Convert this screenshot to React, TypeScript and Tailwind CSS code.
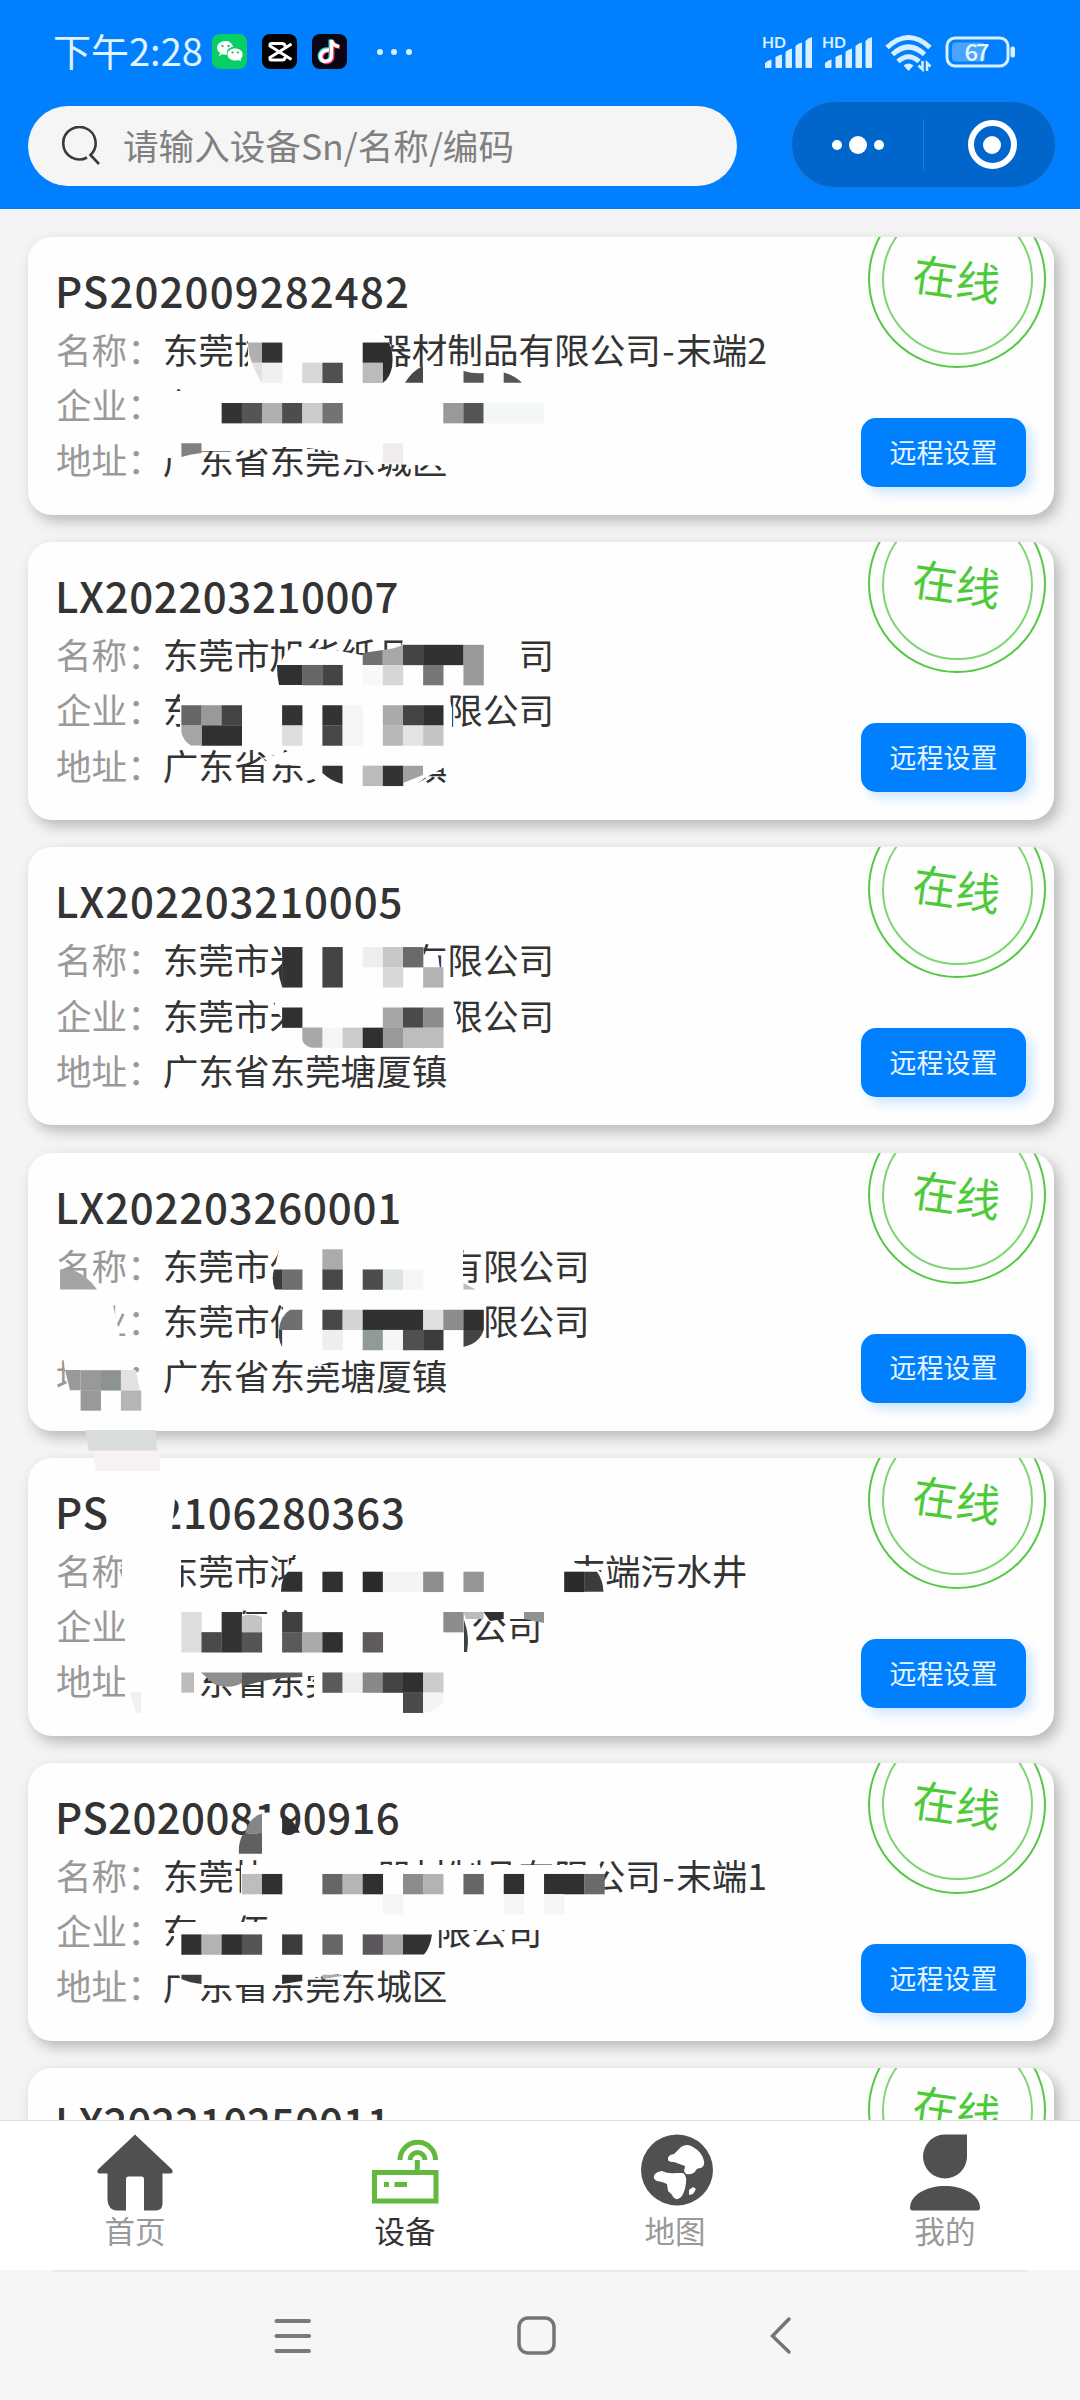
import type { ReactNode } from 'react'

type Device = {
  sn: string
  snClass: string
  name?: string
  company?: string
  address?: string
}

// \u3000 keeps the width of a hidden character
const DEVICES: Device[] = [
  {
    sn: 'PS202009282482',
    snClass: 'tracking-[1.1px]',
    name: '东莞协\u3000\u3000\u3000器材制品有限公司-末端2',
    company: '东',
    address: '广东省东莞东城区',
  },
  {
    sn: 'LX202203210007',
    snClass: 'tracking-[0.6px]',
    name: '东莞市旭华纸品\u3000\u3000\u3000司',
    company: '东\u3000\u3000\u3000\u3000\u3000\u3000\u3000限公司',
    address: '广东省东莞\u3000\u3000镇',
  },
  {
    sn: 'LX202203210005',
    snClass: 'tracking-[0.9px]',
    name: '东莞市米\u3000\u3000\u3000有限公司',
    company: '东莞市米\u3000\u3000\u3000\u3000限公司',
    address: '广东省东莞塘厦镇',
  },
  {
    sn: 'LX202203260001',
    snClass: 'tracking-[0.8px]',
    name: '东莞市伟\u3000\u3000\u3000\u3000有限公司',
    company: '东莞市佰\u3000\u3000\u3000\u3000\u3000限公司',
    address: '广东省东莞塘厦镇',
  },
  {
    sn: 'PS202106280363',
    snClass: 'tracking-[0.8px]',
    name: '东莞市鸿\u3000\u3000\u3000\u3000\u3000\u3000司-末端污水井',
    company: '\u3000\u3000佰东\u3000\u3000\u3000\u3000\u00a0\u00a0\u00a0公司',
    address: '\u3000东省东莞',
  },
  {
    sn: 'PS202008190916',
    snClass: 'tracking-[0.4px]',
    name: '东莞协\u3000\u3000\u3000器材制品有限公司-末端1',
    company: '东\u3000佰\u3000\u3000\u3000\u3000\u00a0\u00a0\u00a0限公司',
    address: '广东省东莞东城区',
  },
  {
    sn: 'LX202210250011',
    snClass: 'tracking-[0px]',
  },
]

// size of one mosaic cell
const CELL = 20.15

// areas that are wiped out before the cells are drawn
const WIPES = [
  // card 1
  '248,325 383,325 383,335 391,345 393,386 248,386',
  '405,383 412,372 423,366 528,366 528,386 405,386',
  '150,393 190,390 560,390 560,430 150,430',
  '160,438 160,458 200,458 201,451 240,451 275,447 300,447 330,451 345,459 370,462 383,464 448,466 448,438',
  // card 2
  '281,690 281,662 284,656 292,646 310,648 335,650 362,655 385,653 402,645 404,630 516,630 516,690',
  '180,688 446,688 452,708 452,748 180,748',
  '262,758 275,764 300,766 308,775 322,785 322,792 405,792 425,778 443,768 450,765 450,748 300,748 275,755',
  // card 3
  '282,936 422,936 424,955 438,955 443,990 282,990',
  '275,996 452,996 458,1018 452,1050 284,1050 284,1020 275,1010',
  // card 4
  '282,1238 463,1238 463,1292 276,1292 274,1270',
  '283,1300 484,1300 484,1352 283,1352',
  '34,1275 60,1269 97,1289 112,1300 119,1332 121,1345 140,1358 130,1362 132,1369 142,1410 70,1410 63,1355 40,1350 34,1330',
  '300,1362 310,1368 338,1360 338,1355 300,1355',
  // card 5
  '107,1480 168,1480 175,1500 171,1540 107,1540',
  '122,1545 181,1545 181,1600 122,1600',
  '125,1600 181,1600 181,1715 125,1715',
  '285,1595 285,1570 297,1557 572,1557 575,1563 596,1568 604,1575 606,1595',
  '181,1614 466,1614 466,1600 548,1600 548,1619 466,1619 470,1655 181,1655',
  '181,1660 445,1660 445,1715 314,1715 314,1676 195,1676 195,1712 181,1712',
  // card 6
  '262,1813 274,1812 282,1819 282,1840 262,1840',
  '241,1865 600,1865 606,1897 241,1897',
  '174,1930 178,1922 270,1922 270,1905 548,1905 548,1930 430,1930 430,1957 174,1957',
  '177,1966 180,1978 201,1985 290,1985 310,1978 340,1974 345,1966',
]

// [column, row, columns, rows, colour]
const CELLS: [number, number, number, number, string][] = [
  [13, 17, 1, 1, '#333333'], [13, 18, 1, 1, '#f0f0f0'], [15, 18, 1, 1, '#d8d8d8'], [16, 18, 1, 1, '#505050'],
  [18, 17, 1, 1, '#2e2e2e'], [18, 18, 1, 1, '#bbbbbb'], [11, 20, 1, 1, '#333333'], [12, 20, 1, 1, '#555555'],
  [13, 20, 1, 1, '#b0b0b0'], [14, 20, 1, 1, '#4d4d4d'], [15, 20, 1, 1, '#cccccc'], [16, 20, 1, 1, '#737373'],
  [22, 20, 1, 1, '#999999'], [23, 20, 1, 1, '#555555'], [24, 20, 3, 1, '#f3f8f7'], [19, 22, 1, 1, '#f0ecee'],

  [15, 33, 1, 1, '#666666'], [16, 33, 1, 1, '#444444'], [20, 32, 1, 1, '#444444'], [21, 32, 2, 1, '#303030'],
  [23, 32, 1, 2, '#999999'], [18, 33, 1, 1, '#f8f8f8'], [19, 33, 1, 1, '#d6d6d6'], [21, 33, 1, 1, '#777777'],
  [9, 35, 1, 1, '#666666'], [10, 35, 1, 1, '#999999'], [11, 35, 1, 1, '#444444'], [10, 36, 2, 1, '#303030'],
  [14, 35, 1, 1, '#333333'], [14, 36, 1, 1, '#dddddd'], [16, 35, 1, 1, '#333333'], [16, 36, 1, 1, '#484848'],
  [17, 35, 1, 2, '#f5f5f5'], [19, 35, 1, 1, '#aaaaaa'], [20, 35, 1, 1, '#444444'], [21, 35, 1, 1, '#303030'],
  [19, 36, 1, 1, '#b8b8b8'], [20, 36, 1, 1, '#e4e4e4'], [21, 36, 1, 1, '#c4c4c4'], [18, 38, 1, 1, '#bbbbbb'],
  [19, 38, 1, 1, '#333333'],

  [14, 47, 1, 2, '#333333'], [16, 47, 1, 2, '#444444'], [18, 47, 1, 1, '#eeeeee'], [19, 47, 1, 1, '#c8c8c8'],
  [19, 48, 1, 1, '#d8d8d8'], [20, 47, 1, 1, '#6a6a6a'], [21, 48, 1, 1, '#b3b3b3'], [14, 50, 1, 1, '#303030'],
  [19, 50, 1, 1, '#a5a5a5'], [20, 50, 1, 1, '#4a4a4a'], [21, 50, 1, 1, '#8c8c8c'], [16, 51, 1, 1, '#f6f6f6'],
  [17, 51, 1, 1, '#cccccc'], [18, 51, 1, 1, '#303030'], [19, 51, 1, 1, '#999999'], [20, 51, 2, 1, '#bdbdbd'],

  [14, 63, 1, 1, '#6f6f6f'], [16, 62, 1, 1, '#ababab'], [16, 63, 1, 1, '#484848'], [18, 63, 1, 1, '#4d4d4d'],
  [19, 63, 1, 1, '#dfe4e0'], [20, 63, 1, 1, '#f6f6f6'], [16, 65, 1, 1, '#484848'], [17, 65, 1, 1, '#d4d4d4'],
  [18, 65, 3, 1, '#303030'], [21, 65, 1, 1, '#e0e0e0'], [22, 65, 1, 1, '#8c8c8c'], [23, 65, 1, 1, '#303030'],
  [16, 66, 1, 1, '#eeeeee'], [18, 66, 1, 1, '#929a98'], [19, 66, 1, 1, '#f5f7f7'], [20, 66, 1, 1, '#505050'],
  [21, 66, 1, 1, '#3c3c3c'], [4, 68, 1, 1, '#999999'], [5, 68, 1, 1, '#8d9391'], [4, 69, 1, 1, '#999999'],
  [6, 69, 1, 1, '#b5b5b5'],

  [16, 78, 1, 1, '#303030'], [18, 78, 1, 1, '#2b2b2b'], [19, 78, 2, 1, '#f5f4f5'], [21, 78, 1, 1, '#8a8e8c'],
  [23, 78, 1, 1, '#959595'], [28, 78, 1, 1, '#2b2b2b'], [9, 80, 1, 2, '#dddddd'], [11, 80, 1, 2, '#333333'],
  [14, 80, 1, 1, '#404040'], [22, 80, 1, 1, '#8c8c8c'], [10, 81, 1, 1, '#4a4a4a'],
  [12, 81, 1, 1, '#555555'], [14, 81, 1, 1, '#5a5a5a'], [15, 81, 1, 1, '#aaaaaa'], [16, 81, 1, 1, '#303030'],
  [18, 81, 1, 1, '#5f5a5c'], [16, 83, 1, 1, '#5a5a5a'], [17, 83, 1, 1, '#eeeeee'], [18, 83, 1, 1, '#888888'],
  [19, 83, 1, 1, '#444444'], [20, 83, 1, 1, '#303030'], [21, 83, 1, 1, '#cccccc'], [20, 84, 1, 1, '#4a4a4a'],

  [12, 93, 1, 1, '#bdbdbd'], [13, 93, 1, 1, '#303030'], [16, 93, 1, 1, '#666666'], [17, 93, 1, 1, '#b5b5b5'],
  [18, 93, 1, 1, '#303030'], [20, 93, 1, 1, '#8c8c8c'], [21, 93, 1, 1, '#b3b3b3'], [23, 93, 1, 1, '#666666'],
  [25, 93, 1, 1, '#303030'], [27, 93, 2, 1, '#303030'], [29, 93, 1, 1, '#6a6a6a'], [19, 94, 1, 1, '#f5f5f5'],
  [25, 94, 1, 1, '#f5f5f5'], [27, 94, 1, 1, '#f5f5f5'], [9, 96, 1, 1, '#303030'], [10, 96, 1, 1, '#b3b3b3'],
  [11, 96, 1, 1, '#303030'], [12, 96, 1, 1, '#555555'], [14, 96, 1, 1, '#3c3c3c'], [16, 96, 1, 1, '#666666'],
  [18, 96, 1, 1, '#5c575c'], [19, 96, 1, 1, '#aaa7ab'],
]

// cells cut by the round brush
const SHARDS: [string, string][] = [
  ['M248 342.5H262V362.7H252Q248 353 248 342.5Z', '#b0b0b0'],
  ['M252 362.7H262V383Q256 374 252 362.7Z', '#e2e2e2'],
  ['M382.8 342.5H389Q394 353 392 367Q390 378 383 382.8Z', '#2e2e2e'],
  ['M405 382.8Q412 371 423 366V382.8Z', '#484848'],
  ['M463.5 371Q474 374 483.6 373V382.8H463.5Z', '#555555'],
  ['M503.7 372.5Q514 375 522 382.8H503.7Z', '#555555'],
  ['M181.4 443.3H201.5V453Q191 454 181.4 457Z', '#808080'],
  ['M277 665H302.3V685H279Q277 676 277 665Z', '#303030'],
  ['M362.7 653L382.8 650V665H362.7Z', '#707070'],
  ['M382.8 650Q394 649 403 644.8V665H382.8Z', '#a8a8a8'],
  ['M181.4 725.4H201.5V745.5H191Q183 741 181.4 732Z', '#a5a5a5'],
  ['M322.4 765.7H342.6V784Q331 781 322.4 773Z', '#333333'],
  ['M403 765.7H423V775L403 783Z', '#a0a0a0'],
  ['M278 967H282.1V987Q279 978 278 967Z', '#333333'],
  ['M302.3 1027.6H322.4V1047.8H312Q304 1046 302.3 1040Z', '#a8a8a8'],
  ['M282.1 1269.4H274Q271 1280 275 1289.6H282.1Z', '#3a3a3a'],
  ['M463.5 1283Q470 1287 476 1289.6H463.5Z', '#bbbbbb'],
  ['M60 1269.4H72Q88 1276 97 1289.6H60Z', '#a4a4a4'],
  ['M302.3 1309.7H290Q280 1316 279 1330H302.3Z', '#6f6f6f'],
  ['M279 1330H282.1V1347Q278 1340 279 1330Z', '#404040'],
  ['M463.5 1330H483.6Q480 1343 463.5 1347Z', '#444444'],
  ['M65 1370H80.6V1390.3H70Z', '#999999'],
  ['M120.9 1370H136L139.5 1390.3H120.9Z', '#e2e2e2'],
  ['M85 1430H156L157 1450.8H89Z', '#d9ddd9'],
  ['M93 1450.8H160V1471H96Z', '#f5f1f4'],
  ['M281 1591.8Q281 1578 288 1571.7H302.3V1591.8Z', '#303030'],
  ['M584.3 1571.7H597Q603 1580 603.5 1591.8H584.3Z', '#3c3c3c'],
  ['M241.8 1616Q252 1613 262 1617V1632.2H241.8Z', '#c4c4c4'],
  ['M463.5 1612H483.6V1619H466Z', '#bbbbbb'],
  ['M483.6 1612H503.7V1619L490 1621Z', '#303030'],
  ['M524 1612H544V1623L524 1619Z', '#919191'],
  ['M464 1620Q470 1636 467 1652H464Z', '#404040'],
  ['M181.4 1672.5H194V1692.6H181.4Z', '#bbbbbb'],
  ['M201 1672.5H241.8V1683Q230 1690 214 1684Z', '#8e8e8e'],
  ['M241.8 1672.5H302.3V1677Q270 1677 241.8 1687Z', '#5a5a5a'],
  ['M423 1692.6H443V1702Q436 1712 423 1712.7Z', '#f4f4f4'],
  ['M130 1692.6H141V1712.7H136Z', '#edf1ef'],
  ['M245 1833.7Q248 1818 262 1813.5V1833.7Z', '#858585'],
  ['M262 1833.7V1853.8H239Q238 1843 243 1833.7Z', '#606060'],
  ['M282.1 1813.5Q294 1820 300 1832.7H282.1Z', '#303030'],
  ['M403 1934.4H432Q430 1948 424 1954.5H403Z', '#333333'],
  ['M181.4 1974.7H201.5V1984Q190 1983 181.4 1979Z', '#3c3c3c'],
  ['M282.1 1974.7H302.3V1981L282.1 1984Z', '#303030'],
  ['M322.4 1974.7H342V1976L322.4 1979Z', '#aaaaaa'],
]

function Mosaic() {
  return (
    <svg className="pointer-events-none absolute inset-0" width="1080" height="1911" viewBox="0 209 1080 1911">
      {WIPES.map(points => (
        <polygon key={points} points={points} fill="#fefefe" />
      ))}
      {CELLS.map(([col, row, w, h, fill]) => (
        <rect key={`${col}-${row}`} x={col * CELL} y={row * CELL} width={w * CELL + 0.2} height={h * CELL + 0.2} fill={fill} />
      ))}
      {SHARDS.map(([d, fill]) => (
        <path key={d} d={d} fill={fill} />
      ))}
    </svg>
  )
}

function Signal() {
  return (
    <svg width="52" height="36" viewBox="0 0 52 36" fill="#d8efff">
      <text x="0" y="13.5" fontSize="15" fontWeight="700" fontFamily="Lato, sans-serif" textLength="24" lengthAdjust="spacingAndGlyphs">HD</text>
      <path d="M3 33V29Q6 26 9.500 25.500V33Q9.500 34 8.500 34H4Q3 34 3 33Z" />
      <path d="M13.500 33V23Q16 21 20 20.500V33Q20 34 19 34H14.500Q13.500 34 13.500 33Z" />
      <path d="M23.500 33V18Q26 15 30 14.500V33Q30 34 29 34H24.500Q23.500 34 23.500 33Z" />
      <path d="M33.500 33V12Q36 9 40 8.500V33Q40 34 39 34H34.500Q33.500 34 33.500 33Z" />
      <path d="M43.500 33V7Q46 4 50 3V33Q50 34 49 34H44.500Q43.500 34 43.500 33Z" />
    </svg>
  )
}

function StatusBar() {
  return (
    <div className="flex h-[104px] items-start pl-[53px] pr-[64px] pt-[34px]">
      <span className="mt-[-2px] w-[159px] whitespace-nowrap text-[38px] leading-[36px] text-[#e0f3ff]">下午2:28</span>
      <div className="flex gap-[15px]">
        <svg width="35" height="35" viewBox="0 0 35 35">
          <rect width="35" height="35" rx="8" fill="#07cf63" />
          <path d="M13.500 7C8.500 7 5 10 5 14Q5 17 8 19L7 22L10.500 20.200Q13 21 15 20.500Q14 14 21 12.800Q19.500 7 13.500 7Z" fill="#fff" />
          <path d="M23 14.500C18.500 14.500 15.500 17 15.500 20.500C15.500 24 19 26.500 23 26.500Q25 26.500 26.500 26L29 27.300L28.600 25Q30.700 23.200 30.700 20.500C30.700 17 27.500 14.500 23 14.500Z" fill="#fff" />
          <g fill="#07a551">
            <circle cx="10.500" cy="12" r="1.100" />
            <circle cx="16.500" cy="12" r="1.100" />
            <circle cx="20.500" cy="18.500" r="1" />
            <circle cx="25.800" cy="18.500" r="1" />
          </g>
        </svg>
        <svg width="35" height="35" viewBox="0 0 35 35">
          <rect width="35" height="35" rx="8" fill="#000" />
          <path d="M29.500 10L8 23.500V25Q8 26 9.500 26H20Q23 26 23 23M29.500 25.500L8 12V10.500Q8 9.500 9.500 9.500H20Q23 9.500 23 12.500" fill="none" stroke="#fff" strokeWidth="3" />
        </svg>
        <svg width="35" height="35" viewBox="0 0 35 35">
          <rect width="35" height="35" rx="8" fill="#0b0613" />
          <g fill="none" strokeWidth="4">
            <path d="M16.500 15.500C10 14.500 6.500 20 8 24C10.500 29 18.500 28 18.500 22V5.500Q19.500 11 26 12" stroke="#35dfd8" />
            <path d="M18 17C12 16 8.500 21 10 25C12.500 30.500 20.500 28.500 20.500 22.500V7Q21.500 12 28 13" stroke="#f2315e" />
            <path d="M17 16.200C11 15.500 7.500 20.500 9 24.500C11.500 29.500 19.500 27.500 19.500 22V6Q20.500 11.500 27 12.500" stroke="#fff" strokeWidth="3.400" />
          </g>
        </svg>
      </div>
      <div className="flex h-[36px] flex-1 items-center gap-[8.500px] pl-[29.500px]">
        <span className="size-[6px] rounded-full bg-[#d8efff]" />
        <span className="size-[6px] rounded-full bg-[#d8efff]" />
        <span className="size-[6px] rounded-full bg-[#d8efff]" />
      </div>
      <div className="flex">
        <Signal />
        <div className="ml-[8px]"><Signal /></div>
        <svg className="ml-[11px]" width="48" height="38" viewBox="0 0 48 38">
          <g fill="none" stroke="#d8efff" strokeWidth="5">
            <path d="M2 13.500Q23.500 -6.500 45 13.500" />
            <path d="M7.500 20.500Q23.500 5.500 39.500 20.500" />
            <path d="M13 27.500Q23.500 18 34 27.500" />
          </g>
          <path d="M18.500 31.500Q23.500 27.500 28.500 31.500L23.500 37Z" fill="#d8efff" />
          <path d="M38 27V35.500L33.500 31M42 37V29L45.500 32.500" fill="none" stroke="#0080ff" strokeWidth="5" />
          <path d="M37.500 27V35.500L33.500 31.500M42 37V29L45.500 32.500" fill="none" stroke="#d8efff" strokeWidth="2.500" />
        </svg>
        <svg className="ml-[12px]" width="71" height="36" viewBox="0 0 71 36">
          <rect x="2" y="4" width="61" height="28" rx="8" fill="none" stroke="#d8efff" strokeWidth="3" />
          <rect x="7" y="8.500" width="33" height="19" rx="4" fill="#4aa4ff" />
          <rect x="65.500" y="12.500" width="4.500" height="11" rx="2" fill="#d8efff" />
          <text x="32" y="26.500" textAnchor="middle" fontSize="24" fontWeight="500" fontFamily="'Noto Sans CJK SC', sans-serif" fill="#e8f6ff" textLength="25">67</text>
        </svg>
      </div>
    </div>
  )
}

function Header() {
  return (
    <header className="h-[209px] bg-[#0080ff]">
      <StatusBar />
      <div className="flex pl-[28px]">
        <div className="mt-[2px] flex h-[80px] w-[709px] items-center rounded-full bg-[#f5f5f5] pl-[34px]">
          <svg width="40" height="40" viewBox="0 0 40 40" fill="none" stroke="#3a3a3a" strokeWidth="2.600">
            <path d="M25 31.500A16.200 16.200 0 1 1 28.500 29L37 38" />
          </svg>
          <span className="ml-[21px] mt-[-3px] text-[35.600px] leading-[52px] text-[#808080]">请输入设备Sn/名称/编码</span>
        </div>
        <div className="ml-[54px] mt-[-3px] flex h-[87px] w-[265px] items-center rounded-full border border-[#1a7cdd] bg-[#0066cc]">
          <div className="flex w-[131px] items-center justify-center gap-[7px]">
            <span className="size-[10px] rounded-full bg-white" />
            <span className="size-[18px] rounded-full bg-white" />
            <span className="size-[10px] rounded-full bg-white" />
          </div>
          <div className="h-[52px] w-px bg-[#1a7cdd]" />
          <div className="flex flex-1 justify-center pl-[5px]">
            <div className="flex size-[49px] items-center justify-center rounded-full border-[6px] border-white">
              <div className="size-[18px] rounded-full bg-white" />
            </div>
          </div>
        </div>
      </div>
    </header>
  )
}

function Row({ label, value }: { label: string; value: string }) {
  const [company, site] = value.split('-')
  return (
    <div className="flex h-[55.200px] whitespace-pre text-[35.600px] leading-[55px]">
      <span className="text-[#999999]">{label}：</span>
      <span className="text-[#333333]">
        {company}
        {site && <span className="px-[1.500px]">-</span>}
        {site}
      </span>
    </div>
  )
}

function DeviceCard({ device }: { device: Device }) {
  return (
    <div className="relative h-[278px] shrink-0 rounded-[24px] bg-[#fefefe] shadow-[5px_6px_14px_rgba(0,0,0,0.25)]">
      <div className="pl-[28px] pt-[25px]">
        <div className={`ml-[-1px] mb-[3px] text-[42px] font-medium leading-[56px] text-[#333333] ${device.snClass}`}>{device.sn}</div>
        {device.name && <Row label="名称" value={device.name} />}
        {device.company && <Row label="企业" value={device.company} />}
        {device.address && <Row label="地址" value={device.address} />}
      </div>
      <div className="absolute inset-0 overflow-hidden rounded-[24px]">
        <div className="absolute left-[840px] top-[-47px] flex size-[178px] items-center justify-center rounded-full border-2 border-[#55c945]">
          <div className="flex size-[151px] items-center justify-center rounded-full border-2 border-[#7dd671]">
            <span className="mt-[-4px] rotate-[8deg] text-[44px] leading-none text-[#4cca38]">在线</span>
          </div>
        </div>
      </div>
      <button className="absolute left-[833px] top-[181px] h-[69px] w-[165px] rounded-[15px] bg-[#0080ff] pb-[1px] text-[27px] text-[#e8f6ff] shadow-[6px_6px_12px_rgba(0,128,255,0.2)]">
        远程设置
      </button>
    </div>
  )
}

function Tab({ label, active, children }: { label: string; active?: boolean; children: ReactNode }) {
  return (
    <div className="flex flex-1 flex-col items-center pt-[13px]">
      <svg width="78" height="78" viewBox="0 0 78 78" fill="#505050">
        {children}
      </svg>
      <span className={`mt-[-3px] text-[30.500px] leading-[42px] ${active ? 'text-[#333333]' : 'text-[#999999]'}`}>{label}</span>
    </div>
  )
}

function TabBar() {
  return (
    <nav className="flex h-[150px] border-t border-[#e0e0e0] bg-white">
      <Tab label="首页">
        <path d="M39 0.500L76 35.500Q78 39.500 74 39.500H66.500V70Q66 76.500 60 76.500H48V45Q48 42.500 45.500 42.500H32.500Q30 42.500 30 45V76.500H21Q12 76 11.500 66V39.500H4Q0 39.500 2 35.500Z" />
      </Tab>
      <Tab label="设备" active>
        <g fill="none" stroke="#62b93c" strokeWidth="5">
          <rect x="8.500" y="38.500" width="61.500" height="28.500" />
          <path d="M51.300 38V26M28.500 50.500H41M18 50.500H23M34 26A17.500 17.500 0 0 1 69.500 26M44 26A7.500 7.500 0 0 1 59 26" />
        </g>
      </Tab>
      <Tab label="地图">
        <ellipse cx="41" cy="36" rx="36" ry="35.500" />
        <path d="M32 26Q31 21 38 20L45 13Q51 9 57 13Q66 18 68 27Q69 32 65 34Q60 34 59 38Q55 41 50 40L48 37L49 32L38 28Q33 28 32 26Z" fill="#fff" />
        <path d="M18 42Q19 38 26 37Q32 40 40 39H47L49 41Q51 45 50 49Q49 57 46 62Q42 67 38 64Q36 60 32 57L31 50L26 48L21 47Q17 45 18 42Z" fill="#fff" />
        <path d="M53 56L57 53L60 55L57 60L53 61Z" fill="#fff" />
      </Tab>
      <Tab label="我的">
        <path d="M38 0.500H61V23A22 22 0 1 1 38 0.500Z" />
        <path d="M39 52C56 52 74 60 74 74Q74 76.500 71 76.500H7Q4 76.500 4 74C4 60 22 52 39 52Z" />
      </Tab>
    </nav>
  )
}

function SystemNav() {
  return (
    <div className="flex h-[130px] flex-col items-center bg-[#f6f6f6]">
      <div className="h-[2px] w-[976px] bg-[#e8e8e8]" />
      <div className="flex w-full flex-1 pl-[274px] pt-[43px]">
        <svg width="38" height="40" viewBox="0 0 38 40" fill="none" stroke="#7a7a7a" strokeWidth="4" strokeLinecap="round">
          <path d="M2.500 6H35M2.500 21H35M2.500 36H35" />
        </svg>
        <svg className="ml-[204px]" width="40" height="42" viewBox="0 0 40 42" fill="none" stroke="#757575" strokeWidth="3.500">
          <rect x="3" y="3" width="35" height="35" rx="9" />
        </svg>
        <svg className="ml-[212px]" width="26" height="42" viewBox="0 0 26 42" fill="none" stroke="#757575" strokeWidth="3.500" strokeLinecap="round">
          <path d="M21 4L4.500 21L21 37" />
        </svg>
      </div>
    </div>
  )
}

export default function App() {
  return (
    <div className="flex h-[2400px] w-[1080px] flex-col overflow-hidden bg-[#f4f4f4] font-['Noto_Sans_CJK_SC','Noto_Sans',sans-serif]">
      <Header />
      <main className="relative h-[1911px] overflow-hidden">
        <div className="flex flex-col gap-[27.200px] pl-[28px] pr-[26px] pt-[28px]">
          {DEVICES.map(device => (
            <DeviceCard key={device.sn} device={device} />
          ))}
        </div>
        <Mosaic />
      </main>
      <TabBar />
      <SystemNav />
    </div>
  )
}
